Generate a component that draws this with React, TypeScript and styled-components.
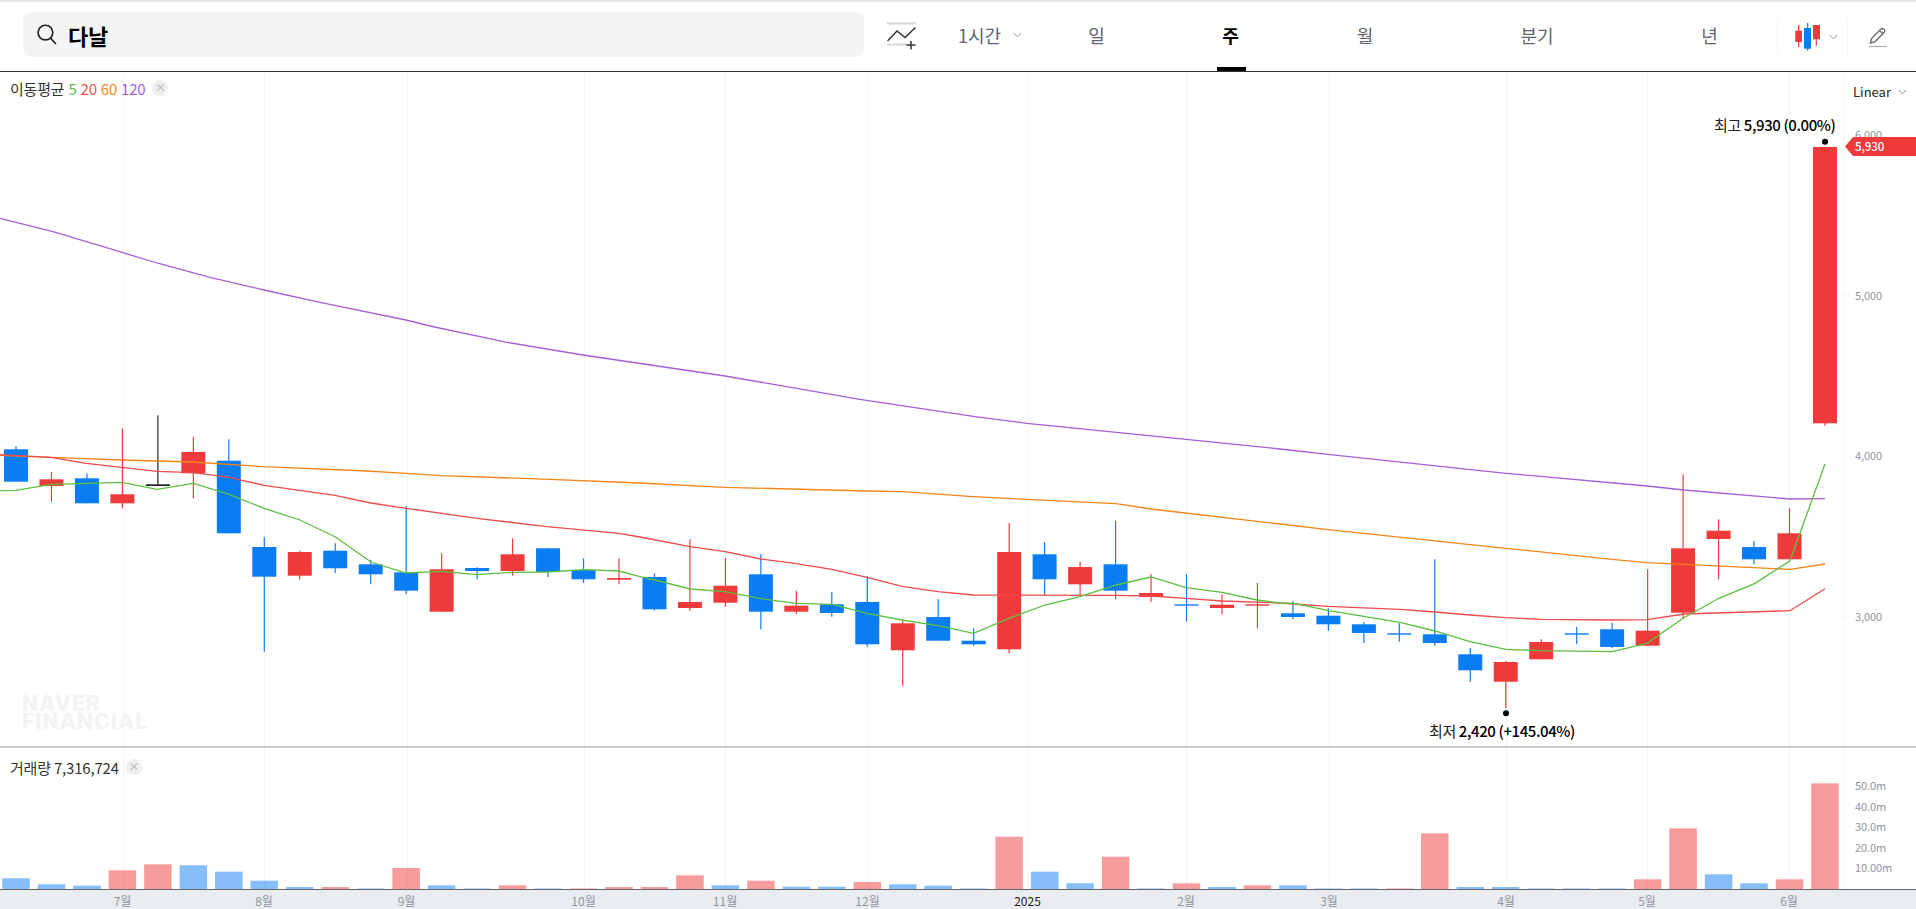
import React from 'react'
import styled, { createGlobalStyle } from 'styled-components'

const RED = '#ef3a3c'
const BLUE = '#0b7df3'
const BLACK = '#222222'
const GRID = '#f3f4f7'
const FONT = '"Noto Sans CJK KR", "Noto Sans", sans-serif'

const GlobalStyle = createGlobalStyle`
  html, body {
    margin: 0;
    padding: 0;
    background: #fff;
    font-family: ${FONT};
    overflow: hidden;
  }
`

const Page = styled.div`
  width: 1916px;
  height: 909px;
  display: flex;
  flex-direction: column;
  border-top: 2px solid #e2e2e2;
  box-sizing: border-box;
  overflow: hidden;
`

const Header = styled.header`
  height: 70px;
  flex: none;
  box-sizing: border-box;
  border-bottom: 1px solid #333;
  padding-left: 23px;
  display: flex;
  align-items: center;
`

const SearchBox = styled.div`
  width: 841px;
  height: 45px;
  margin-top: -4px;
  box-sizing: border-box;
  padding-left: 14px;
  background: #f3f4f6;
  border-radius: 8px;
  display: flex;
  align-items: center;
  gap: 11px;
`

const SearchText = styled.span`
  font-size: 22px;
  font-weight: 700;
  color: #000;
  letter-spacing: -0.2px;
`

const IndicatorButton = styled.button`
  width: 30px;
  height: 28px;
  margin: -1px 0 0 23px;
  padding: 0;
  border: 0;
  background: none;
  display: flex;
`

const IntervalSelect = styled.div`
  width: 64px;
  margin: -3px 8px 0 41px;
  display: flex;
  align-items: center;
  justify-content: space-between;
  font-size: 18px;
  color: #5f6670;
  white-space: nowrap;
`

const TabRow = styled.nav`
  align-self: stretch;
  display: grid;
  grid-template-columns: 133px 135px 134px 210px 135px;
`

const Tab = styled.a<{ $active?: boolean }>`
  position: relative;
  display: flex;
  align-items: center;
  justify-content: center;
  padding-bottom: 4px;
  font-size: 18px;
  font-weight: ${(p) => (p.$active ? 700 : 400)};
  color: ${(p) => (p.$active ? '#000' : '#5f6670')};

  &::after {
    content: '';
    display: ${(p) => (p.$active ? 'block' : 'none')};
    position: absolute;
    left: 50%;
    bottom: 0;
    width: 29px;
    height: 4px;
    margin-left: -14px;
    background: #000;
  }
`

const ChartTypeButton = styled.div`
  width: 71px;
  height: 34px;
  box-sizing: border-box;
  border-left: 1px solid ${GRID};
  border-right: 1px solid ${GRID};
  padding-left: 17px;
  display: flex;
  align-items: center;
  gap: 9px;
`

const PencilButton = styled.div`
  margin: 1px 0 0 20px;
  display: flex;
`

const ChartPane = styled.section<{ $height: number }>`
  position: relative;
  flex: none;
  height: ${(p) => p.$height}px;

  svg {
    display: block;
  }
`

const Divider = styled.div`
  flex: none;
  height: 2px;
  background: #c6ccd4;
`

const TimeAxisBar = styled.div`
  flex: 1;
  position: relative;
  background: #e9ecf1;
  border-top: 1px solid #666;
  svg {
    display: block;
  }
`

const Legend = styled.div<{ $top: number }>`
  position: absolute;
  left: 10px;
  top: ${(p) => p.$top}px;
  display: flex;
  align-items: center;
  height: 16px;
  font-size: 15px;
  letter-spacing: -0.2px;
  color: #333;
  white-space: nowrap;
`

const LegendValue = styled.span<{ $color: string }>`
  margin-left: 4px;
  color: ${(p) => p.$color};
`

const CloseChip = styled.span<{ $gap: number }>`
  width: 16px;
  height: 16px;
  margin-left: ${(p) => p.$gap}px;
  border-radius: 50%;
  background: #efefef;
  color: #a8a8a8;
  font-size: 11px;
  line-height: 15px;
  text-align: center;
`

const ScaleSelect = styled.div`
  position: absolute;
  left: 1853px;
  top: 10px;
  width: 54px;
  display: flex;
  align-items: center;
  justify-content: space-between;
  font-size: 13px;
  color: #222;
`

const Tick = styled.text`
  font-family: ${FONT};
  font-size: 11px;
  letter-spacing: -0.1px;
  fill: #8f95a0;
`

const MonthLabel = styled.text<{ $strong?: boolean }>`
  font-family: ${FONT};
  font-size: 12px;
  text-anchor: middle;
  fill: ${(p) => (p.$strong ? '#222' : '#8f95a0')};
`

const StatLabel = styled.text`
  font-family: ${FONT};
  font-size: 15px;
  letter-spacing: -0.4px;
  fill: #222;
  text-anchor: end;

  tspan {
    font-weight: 500;
    fill: #000;
  }
`

const PriceTagText = styled.text`
  font-family: ${FONT};
  font-size: 11.5px;
  font-weight: 500;
  letter-spacing: -0.1px;
  fill: #fff;
`

const Watermark = styled.div`
  position: absolute;
  left: 22px;
  top: 623px;
  font-family: Inter, "Liberation Sans", sans-serif;
  font-size: 21px;
  font-weight: 800;
  line-height: 18px;
  letter-spacing: 1.1px;
  color: #f2f3f5;
`

type Candle = [high: number, low: number, top: number, bottom: number, color: string]

// high, low, body top, body bottom in page px, left to right one per week
const candles: Candle[] = [
  [446, 482, 449.3, 481.7, BLUE],
  [472, 501.7, 479.3, 486, RED],
  [473.3, 503.3, 478.3, 503.3, BLUE],
  [428.3, 508.3, 494.3, 503.3, RED],
  [415.3, 486, 484.3, 486, BLACK],
  [437, 498.3, 452, 473.3, RED],
  [439.3, 533.3, 460.7, 533.3, BLUE],
  [537, 651.7, 547, 576.7, BLUE],
  [550.7, 579.3, 552, 575.7, RED],
  [543.3, 573, 550.7, 568.3, BLUE],
  [560, 584.3, 564.3, 574.3, BLUE],
  [506, 594.3, 572.3, 590.7, BLUE],
  [553.3, 611.7, 569.3, 611.7, RED],
  [567.3, 579.3, 568, 571, BLUE],
  [538.3, 575.7, 554.3, 571, RED],
  [548.3, 577, 548.3, 572, BLUE],
  [558.3, 583, 570, 579.3, BLUE],
  [558.3, 584.3, 578, 579.7, RED],
  [573.3, 610.7, 577, 609.3, BLUE],
  [539.3, 610.7, 602, 608, RED],
  [558, 606.7, 585.7, 602.7, RED],
  [554.3, 629.3, 574.3, 611.7, BLUE],
  [590.7, 614.3, 605.7, 611.7, RED],
  [592, 616.7, 604.3, 613, BLUE],
  [576, 646.7, 602, 644.3, BLUE],
  [620, 685.7, 623.3, 650.3, RED],
  [599.3, 640.7, 617, 640.7, BLUE],
  [628.3, 646, 640.7, 644.3, BLUE],
  [523, 653.3, 552, 649.3, RED],
  [542, 595.3, 554.3, 579.3, BLUE],
  [562, 595.3, 567, 584.3, RED],
  [520.7, 599.3, 564.3, 590.7, BLUE],
  [574, 602, 593, 597, RED],
  [574, 621.7, 604.3, 605.7, BLUE],
  [594.3, 614.3, 604.7, 608, RED],
  [583, 628.3, 604.3, 605.7, RED],
  [601, 619.3, 613.3, 617, BLUE],
  [608.3, 630.7, 615.7, 624.3, BLUE],
  [622, 643, 624.3, 633, BLUE],
  [623.3, 641.7, 633.3, 634.3, BLUE],
  [559.3, 645.7, 634.3, 643, BLUE],
  [648, 681.7, 654.3, 670.3, BLUE],
  [661, 708.3, 662, 681.7, RED],
  [639.3, 659.3, 642, 659.3, RED],
  [627, 644.3, 633.3, 634.3, BLUE],
  [622.7, 648, 629.3, 647, BLUE],
  [569.3, 645.7, 630.7, 645.7, RED],
  [474.3, 618.3, 548.3, 612.7, RED],
  [519.3, 579.3, 530.7, 539, RED],
  [541, 564.3, 547, 559.3, BLUE],
  [508.3, 559.3, 533.3, 559.3, RED],
  [147, 425.7, 147, 423.3, RED],
]

type VolumeBar = [height: number, color: string]

const volumes: VolumeBar[] = [
  [10.7, BLUE], [4.7, BLUE], [3.3, BLUE], [18.7, RED], [24.7, RED], [23.7, BLUE],
  [17.3, BLUE], [8.3, BLUE], [2, BLUE], [2, RED], [0.5, BLUE], [21, RED],
  [3.7, BLUE], [0.5, BLUE], [3.7, RED], [0.5, BLUE], [0.5, RED], [2, RED],
  [2, RED], [13.7, RED], [3.7, BLUE], [8.3, RED], [2.3, BLUE], [2.3, BLUE],
  [7, RED], [4.7, BLUE], [3.3, BLUE], [0.5, BLUE], [52.3, RED], [17.3, BLUE],
  [5.7, BLUE], [32.3, RED], [0.5, BLUE], [5.7, RED], [2, BLUE], [3.7, RED],
  [3.7, BLUE], [0.5, BLUE], [0.5, BLUE], [0.5, RED], [55.7, RED], [2, BLUE],
  [2, BLUE], [0.5, BLUE], [0.5, BLUE], [0.5, BLUE], [9.7, RED], [60.7, RED],
  [14.7, BLUE], [5.7, BLUE], [9.7, RED], [105.7, RED],
]

const ma120 =
  '0,218.3 53,231.7 123,252.7 157,263 210,277.3 264,290 320,302.3 406,320 430,326 507,342.3 583,355 725,376 860,399.3 975,416.7 1027,423.3 1186,439.3 1280,449 1328,454.3 1506,473.3 1647,486 1684,490 1790,499 1825,498.7'
const ma60 =
  '0,455.3 51,457.3 122,460 192,462 264,466.7 367,471 406,473.3 441,475.7 531,478.7 640,483 725,487.3 867,491 902,491.7 973,496.7 1116,503.7 1151,509 1280,524 1328,529.7 1506,548.3 1612,559.3 1647,562.7 1790,569.3 1825,564'
const ma20 =
  '0,454.7 51,457.3 86,463.3 157,471.3 193.5,472.7 229,477.3 264,485.3 335,495.3 371,503 406,508.3 477,518.3 547,526.7 619,533.3 640,537 690,546.7 725,551.7 761,559 796,563.7 832,569.3 867,577.3 902,586.3 938,591.7 973.5,595 1116,595.3 1151,596 1186,598.3 1222,601 1280,603 1328,606.3 1400,609.3 1435,612 1470,615 1506,617.7 1541,619.3 1612,620 1647,619.7 1684,614 1790,610.7 1825,588.7'
const ma5 =
  '0,490.7 16,490.3 51,484.3 122,482.3 157,489.3 193.5,483.3 229,494.3 264,508.3 300,520 335,536.7 371,562 406,573 441,571.3 477,574.7 512,572.3 547,572 584,569.7 619,571 640,576.7 655,580 690,589 725,591.7 761,598.7 796,603.3 832,604.3 867,613.3 902,620 938,625.7 973.5,633.3 1009,618.3 1045,605 1080,596.7 1116,585 1151,577 1186,587.7 1222,592.3 1257,600 1280,603 1293.5,603.3 1329,610.7 1400,622.3 1435,631 1470,641.7 1506,649.3 1541,650.7 1612,651.7 1647,643.3 1683,618.3 1719,598.3 1755,583.3 1790,560.7 1825,464'

const months: [number, string][] = [
  [122.5, '7월'], [264, '8월'], [406.5, '9월'], [583.5, '10월'], [725, '11월'], [867.5, '12월'],
  [1027.5, '2025'], [1186, '2월'], [1329, '3월'], [1506, '4월'], [1647, '5월'], [1789, '6월'],
]

const priceTicks: [number, string][] = [
  [134, '6,000'], [295, '5,000'], [455.3, '4,000'], [616, '3,000'],
]

const volumeTicks: [number, string][] = [
  [786, '50.0m'], [806.7, '40.0m'], [827, '30.0m'], [847.7, '20.0m'], [868, '10.00m'],
]

const candleX = (i: number) => 16 + 35.47 * i
const AXIS_X = 1843.5

const GridLines = ({ top, bottom }: { top: number; bottom: number }) => (
  <g stroke={GRID} strokeWidth="1">
    {months.map(([x]) => (
      <line key={x} x1={Math.round(x) + 0.5} x2={Math.round(x) + 0.5} y1={top} y2={bottom} />
    ))}
    <line x1={AXIS_X} x2={AXIS_X} y1={top} y2={bottom} />
  </g>
)

const Chevron = ({ color = '#8a8f98' }: { color?: string }) => (
  <svg width="9" height="6" viewBox="0 0 9 6" fill="none">
    <path d="M0.8 1 L4.5 4.8 L8.2 1" stroke={color} strokeWidth="1" />
  </svg>
)

const SearchIcon = () => (
  <svg width="20" height="21" viewBox="0 0 19 20" fill="none" stroke="#222" strokeWidth="1.6">
    <circle cx="8" cy="8.2" r="7" />
    <path d="M12.8 13.4 L18 19" />
  </svg>
)

const IndicatorIcon = () => (
  <svg width="30" height="28" viewBox="0 0 30 28" fill="none">
    <path d="M0 1.5 H29 M0 22.5 H20" stroke="#d5d8de" strokeWidth="2" />
    <path d="M0.5 19 L10 9 L18 15.5 L28.5 5.5" stroke="#333" strokeWidth="1.5" />
    <path d="M24 19 V27.5 M19.5 23 H28.5" stroke="#333" strokeWidth="1.5" />
  </svg>
)

const CandleTypeIcon = () => (
  <svg width="25" height="28" viewBox="0 0 25 28">
    <path d="M3.7 2 V24.3" stroke={RED} strokeWidth="1.2" />
    <rect x="0.3" y="7.7" width="6.7" height="11.3" fill={RED} />
    <path d="M12.7 0 V27.7" stroke={BLUE} strokeWidth="1.2" />
    <rect x="9" y="5" width="7" height="20.7" fill={BLUE} />
    <path d="M21.3 2 V22.7" stroke={RED} strokeWidth="1.2" />
    <rect x="18" y="2" width="7" height="14.3" fill={RED} />
  </svg>
)

const PencilIcon = () => (
  <svg width="20" height="22" viewBox="0 0 20 22" fill="none">
    <path
      d="M2.5 17 L3.5 12.5 L13 3 C14.5 1.6 17.8 3.6 16.5 6 L7 15.6 Z M11.5 4.5 L15 8"
      stroke="#666"
      strokeWidth="1.3"
    />
    <path d="M0.5 20.5 H19" stroke="#aaa" strokeWidth="1.2" />
  </svg>
)

const PriceChart = () => (
  <svg width="1916" height="674" viewBox="0 72 1916 674">
    <GridLines top={72} bottom={746} />
    {priceTicks.map(([y, label]) => (
      <g key={label}>
        <line x1={AXIS_X} x2={AXIS_X + 6} y1={y + 0.5} y2={y + 0.5} stroke={GRID} />
        <Tick x="1855" y={y + 4.5}>{label}</Tick>
      </g>
    ))}
    {candles.map(([high, low, top, bottom, color], i) => {
      const x = candleX(i)
      return (
        <g key={i}>
          <line x1={x} x2={x} y1={high} y2={low} stroke={color} strokeWidth="1.2" />
          <rect x={x - 12} y={top} width="24" height={Math.max(bottom - top, 1.4)} fill={color} />
        </g>
      )
    })}
    <polyline points={ma120} fill="none" stroke="#a65fd8" strokeWidth="1.3" />
    <polyline points={ma60} fill="none" stroke="#f58518" strokeWidth="1.3" />
    <polyline points={ma20} fill="none" stroke="#ef4a4c" strokeWidth="1.3" />
    <polyline points={ma5} fill="none" stroke="#5cbf3f" strokeWidth="1.3" />

    <circle cx="1825" cy="141.7" r="3" fill="#000" />
    <StatLabel x="1835.5" y="130.5">
      최고 <tspan>5,930 (0.00%)</tspan>
    </StatLabel>
    <circle cx="1506" cy="713.3" r="3" fill="#000" />
    <StatLabel x="1575" y="737">
      최저 <tspan>2,420 (+145.04%)</tspan>
    </StatLabel>

    <polygon points="1845,146.5 1853,137 1916,137 1916,156 1853,156" fill={RED} />
    <PriceTagText x="1855" y="150.5">5,930</PriceTagText>
  </svg>
)

const VolumeChart = () => (
  <svg width="1916" height="141" viewBox="0 748 1916 141">
    <GridLines top={748} bottom={889} />
    {volumeTicks.map(([y, label]) => (
      <Tick key={label} x="1855" y={y + 4}>{label}</Tick>
    ))}
    {volumes.map(([h, color], i) => (
      <rect key={i} x={candleX(i) - 13.75} y={889 - h} width="27.5" height={h} fill={color} opacity="0.5" />
    ))}
  </svg>
)

const TimeAxis = () => (
  <svg width="1916" height="18" viewBox="0 890 1916 18">
    {months.map(([x, label]) => (
      <MonthLabel key={label} x={x} y="906" $strong={label === '2025'}>{label}</MonthLabel>
    ))}
  </svg>
)

const App: React.FC = () => {
  return (
    <Page>
      <GlobalStyle />
      <Header>
        <SearchBox>
          <SearchIcon />
          <SearchText>다날</SearchText>
        </SearchBox>
        <IndicatorButton>
          <IndicatorIcon />
        </IndicatorButton>
        <IntervalSelect>
          1시간
          <Chevron />
        </IntervalSelect>
        <TabRow>
          <Tab>일</Tab>
          <Tab $active>주</Tab>
          <Tab>월</Tab>
          <Tab>분기</Tab>
          <Tab>년</Tab>
        </TabRow>
        <ChartTypeButton>
          <CandleTypeIcon />
          <Chevron />
        </ChartTypeButton>
        <PencilButton>
          <PencilIcon />
        </PencilButton>
      </Header>

      <ChartPane $height={674}>
        <PriceChart />
        <Legend $top={8}>
          이동평균
          <LegendValue $color="#5cbf3f">5</LegendValue>
          <LegendValue $color="#ef5050">20</LegendValue>
          <LegendValue $color="#f58518">60</LegendValue>
          <LegendValue $color="#a65fd8">120</LegendValue>
          <CloseChip $gap={7}>×</CloseChip>
        </Legend>
        <ScaleSelect>
          Linear
          <Chevron />
        </ScaleSelect>
        <Watermark>
          NAVER
          <br />
          FINANCIAL
        </Watermark>
      </ChartPane>
      <Divider />
      <ChartPane $height={141}>
        <VolumeChart />
        <Legend $top={11}>
          거래량 7,316,724
          <CloseChip $gap={7}>×</CloseChip>
        </Legend>
      </ChartPane>
      <TimeAxisBar>
        <TimeAxis />
      </TimeAxisBar>
    </Page>
  )
}

export default App
